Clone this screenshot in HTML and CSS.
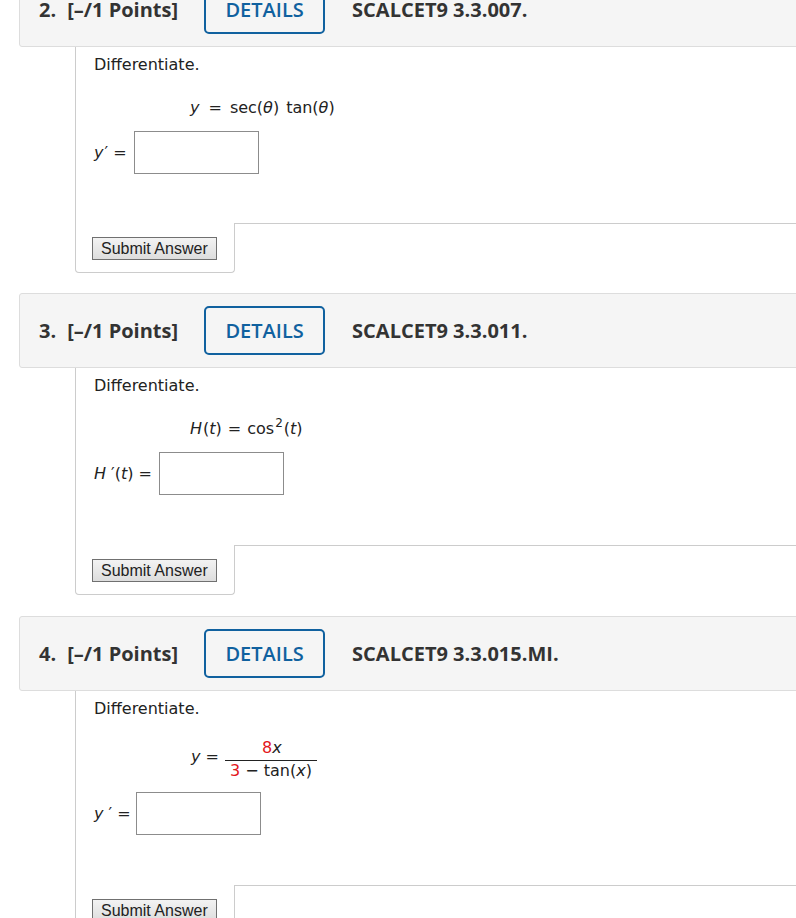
FILE: index.html
```html
<!DOCTYPE html>
<html lang="en">
<head>
<meta charset="utf-8">
<title>Questions</title>
<link rel="stylesheet" href="styles.css">
</head>
<body>
<div class="page">

  <section class="question q-first">
    <header class="qhead">
      <span class="qnum">2.</span>
      <span class="qpts">[–/1 Points]</span>
      <span class="details">DETAILS</span>
      <span class="qref">SCALCET9 3.3.007.</span>
    </header>
    <div class="qbody">
      <p class="prompt">Differentiate.</p>
      <div class="math"><i>y</i><span class="op">=</span>sec(<i>θ</i>)<span class="sp"></span>tan(<i>θ</i>)</div>
      <div class="answer">
        <span class="lbl"><i>y</i><span class="prime">′</span> =</span>
        <span class="ans"></span>
      </div>
    </div>
    <div class="qfoot">
      <div class="submit-cell"><span class="submit">Submit Answer</span></div>
      <div class="aside"></div>
    </div>
  </section>

  <section class="question">
    <header class="qhead">
      <span class="qnum">3.</span>
      <span class="qpts">[–/1 Points]</span>
      <span class="details">DETAILS</span>
      <span class="qref">SCALCET9 3.3.011.</span>
    </header>
    <div class="qbody">
      <p class="prompt">Differentiate.</p>
      <div class="math"><i class="hv">H</i>(<i>t</i>)<span class="op op-narrow">=</span>cos<span class="sup">2</span>(<i>t</i>)</div>
      <div class="answer">
        <span class="lbl"><i>H</i> ′(<i>t</i>) =</span>
        <span class="ans"></span>
      </div>
    </div>
    <div class="qfoot">
      <div class="submit-cell"><span class="submit">Submit Answer</span></div>
      <div class="aside"></div>
    </div>
  </section>

  <section class="question">
    <header class="qhead">
      <span class="qnum">4.</span>
      <span class="qpts">[–/1 Points]</span>
      <span class="details">DETAILS</span>
      <span class="qref">SCALCET9 3.3.015.MI.</span>
    </header>
    <div class="qbody">
      <p class="prompt">Differentiate.</p>
      <div class="math frac-line">
        <span class="lhs"><i>y</i> =</span>
        <span class="fraction">
          <span class="num"><span class="red">8</span><i>x</i></span>
          <span class="den"><span class="red">3</span> − tan(<i>x</i>)</span>
        </span>
      </div>
      <div class="answer">
        <span class="lbl"><i>y</i> ′ =</span>
        <span class="ans ans-tight"></span>
      </div>
    </div>
    <div class="qfoot">
      <div class="submit-cell"><span class="submit">Submit Answer</span></div>
      <div class="aside"></div>
    </div>
  </section>

</div>
</body>
</html>
```

FILE: styles.css
```css
* {
  box-sizing: border-box;
}

html,
body {
  margin: 0;
  padding: 0;
  background: #ffffff;
  overflow: hidden;
}

.page {
  width: 830px;
  margin-top: -28px;
  padding-left: 19px;
}

.question {
  margin-bottom: 21px;
}

.q-first {
  margin-bottom: 20px;
}

/* Header bar */
.qhead {
  display: flex;
  align-items: center;
  height: 75px;
  padding-left: 19px;
  background: #f5f5f5;
  border: 1px solid #dddddd;
  border-radius: 3px;
  font-family: "Open Sans", "DejaVu Sans", sans-serif;
  font-weight: 700;
  font-size: 20px;
  color: #333333;
}

.qpts {
  margin-left: 11px;
}

.details {
  display: flex;
  align-items: center;
  justify-content: center;
  margin-left: 26px;
  width: 121px;
  height: 49px;
  border: 2px solid #10619f;
  border-radius: 5px;
  color: #10619f;
  font-weight: 600;
  font-size: 20px;
}

.qref {
  margin-left: 27px;
}

/* Body */
.qbody {
  margin-left: 56px;
  border-left: 1px solid #cccccc;
  padding: 8px 0 50px 18px;
  font-family: "DejaVu Sans", Verdana, sans-serif;
  font-size: 16px;
  line-height: 19px;
  color: #222222;
}

.q-first .qbody {
  padding-bottom: 49px;
}

.prompt {
  margin: 0;
}

.math {
  margin: 24px 0 0 96px;
  white-space: nowrap;
}

.hv {
  margin-right: 1px;
}

.op {
  margin: 0 8px 0 9px;
}

.op-narrow {
  margin: 0 6px 0 6px;
}

.sp {
  display: inline-block;
  width: 7px;
}

.sup {
  position: relative;
  top: -7px;
  margin: 0 1px 0 1px;
  font-size: 12px;
  line-height: 0;
}

.prime {
  margin-left: 1px;
}

.frac-line {
  display: flex;
  align-items: center;
  margin-top: 20px;
  margin-left: 97px;
}

.lhs {
  position: relative;
  top: -3px;
}

.fraction {
  display: inline-flex;
  flex-direction: column;
  margin-left: 6px;
  text-align: center;
}

.num {
  padding: 0 0 3px 2px;
  border-bottom: 1px solid #222222;
}

.den {
  padding: 0 5px 0 5px;
}

.red {
  color: #e3161b;
}

.answer {
  display: flex;
  align-items: center;
  margin-top: 14px;
}

.frac-line + .answer {
  margin-top: 12px;
}

.lbl {
  white-space: nowrap;
}

.ans {
  display: block;
  width: 125px;
  height: 43px;
  margin-left: 7px;
  border: 1px solid #8c8c8c;
  background: #ffffff;
}

.ans-tight {
  margin-left: 5px;
}

/* Footer with submit button */
.qfoot {
  display: flex;
  margin-left: 56px;
}

.submit-cell {
  display: flex;
  align-items: flex-start;
  width: 160px;
  height: 50px;
  border: 1px solid #cccccc;
  border-top: 0;
  border-radius: 0 0 4px 4px;
  padding: 14px 0 0 16px;
}

.aside {
  flex: 1;
  height: 50px;
  border-top: 1px solid #cccccc;
}

.submit {
  display: block;
  height: 23px;
  padding: 1px 8px;
  border: 1px solid #707070;
  background: linear-gradient(#f3f3f3, #dddddd);
  font-family: "Liberation Sans", Arial, sans-serif;
  font-size: 16px;
  line-height: 19px;
  color: #222222;
}
```
